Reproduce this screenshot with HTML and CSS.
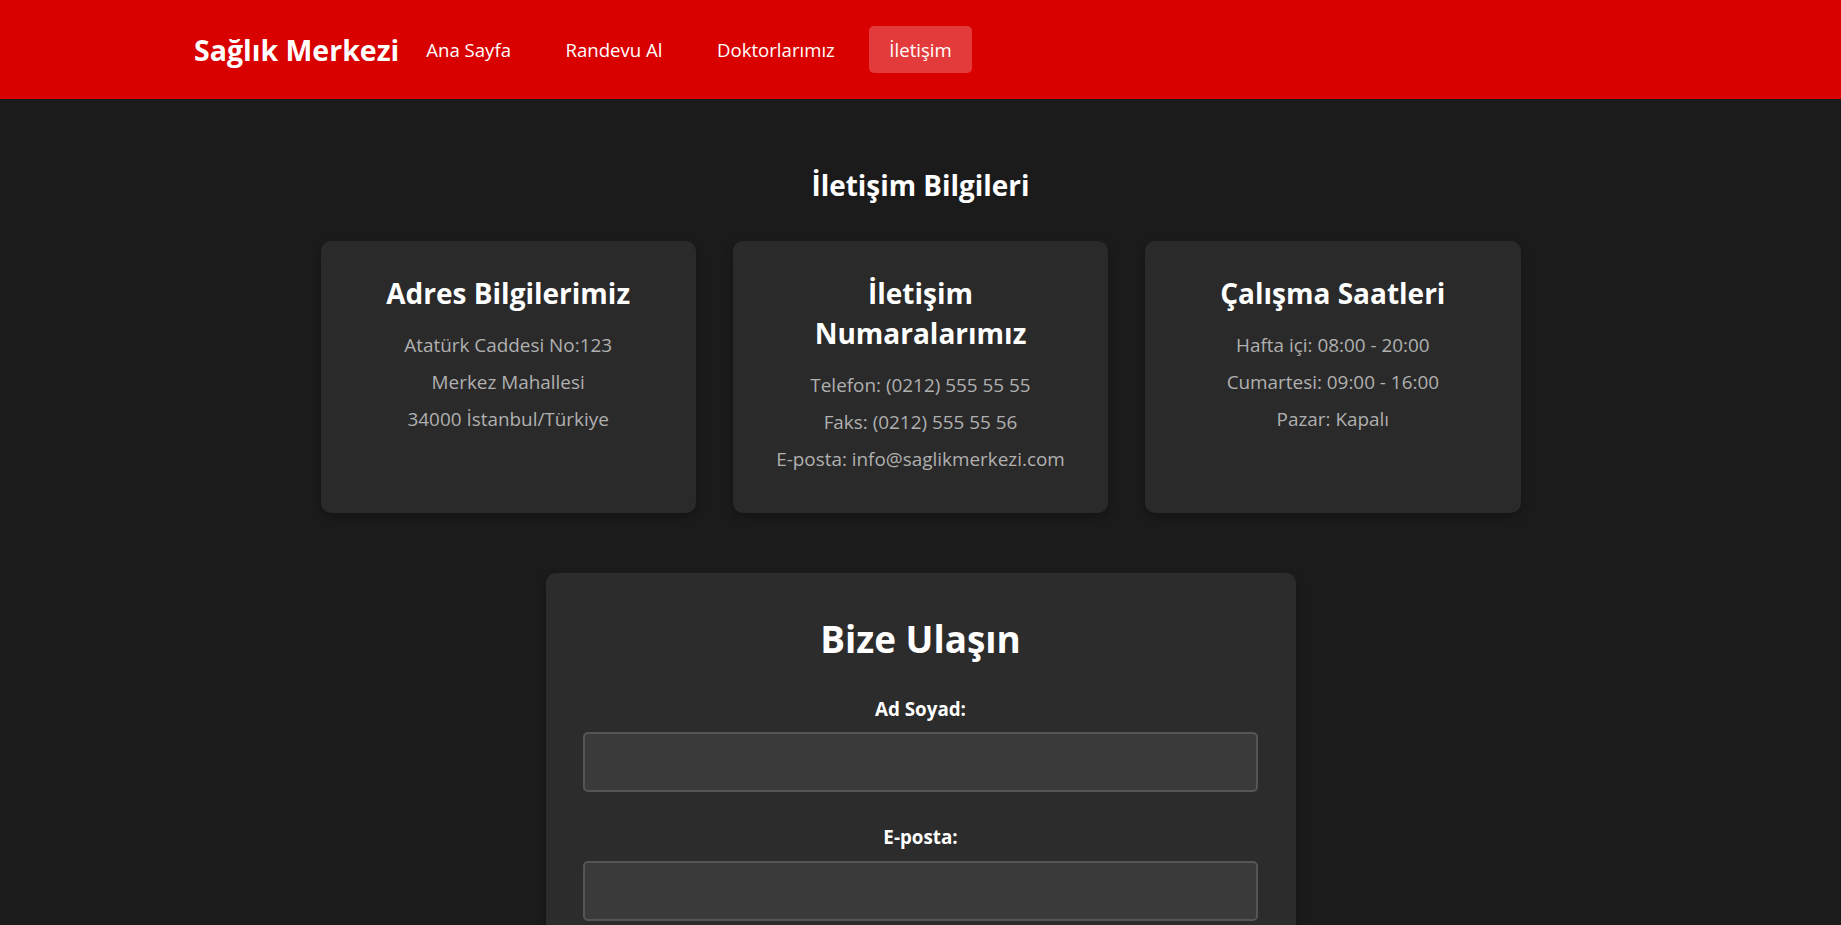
FILE: index.html
```html
<!DOCTYPE html>
<html lang="tr">
<head>
<meta charset="utf-8">
<title>İletişim - Sağlık Merkezi</title>
<link rel="stylesheet" href="styles.css">
</head>
<body>
<header class="navbar">
  <div class="logo">Sağlık Merkezi</div>
  <nav class="nav">
    <a class="nav-link" href="#">Ana Sayfa</a>
    <a class="nav-link" href="#">Randevu Al</a>
    <a class="nav-link" href="#">Doktorlarımız</a>
    <a class="nav-link active" href="#">İletişim</a>
  </nav>
</header>
<main class="main">
  <h2 class="page-title">İletişim Bilgileri</h2>
  <section class="cards">
    <div class="card">
      <h3 class="card-title">Adres Bilgilerimiz</h3>
      <p class="card-line">Atatürk Caddesi No:123</p>
      <p class="card-line">Merkez Mahallesi</p>
      <p class="card-line">34000 İstanbul/Türkiye</p>
    </div>
    <div class="card">
      <h3 class="card-title">İletişim<br>Numaralarımız</h3>
      <p class="card-line">Telefon: (0212) 555 55 55</p>
      <p class="card-line">Faks: (0212) 555 55 56</p>
      <p class="card-line">E-posta: info@saglikmerkezi.com</p>
    </div>
    <div class="card">
      <h3 class="card-title">Çalışma Saatleri</h3>
      <p class="card-line">Hafta içi: 08:00 - 20:00</p>
      <p class="card-line">Cumartesi: 09:00 - 16:00</p>
      <p class="card-line">Pazar: Kapalı</p>
    </div>
  </section>
  <form class="contact-form">
    <h2 class="form-title">Bize Ulaşın</h2>
    <div class="form-group">
      <label class="form-label" for="ad">Ad Soyad:</label>
      <input class="form-input" id="ad" type="text">
    </div>
    <div class="form-group">
      <label class="form-label" for="email">E-posta:</label>
      <input class="form-input" id="email" type="email">
    </div>
  </form>
</main>
</body>
</html>
```
FILE: styles.css
```css
* { box-sizing: border-box; }
html, body { margin: 0; padding: 0; }
body {
  background: #1b1b1b;
  color: #ffffff;
  font-family: "Open Sans", "Noto Sans", sans-serif;
  overflow: hidden;
}
.navbar {
  height: 99px;
  background: #d90000;
  display: flex;
  align-items: center;
  padding: 0 194px;
}
.logo {
  font-size: 28.5px;
  font-weight: 700;
  line-height: 38px;
  color: #fff;
}
.nav {
  display: flex;
  align-items: center;
  gap: 14.5px;
  margin-left: 7px;
}
.nav-link {
  color: #fff;
  text-decoration: none;
  font-size: 18.6px;
  line-height: 25px;
  padding: 11px 20px;
  border-radius: 5px;
}
.nav-link.active { background: #e33b3b; }
.main {
  display: flex;
  flex-direction: column;
  align-items: center;
  padding-top: 67px;
}
.page-title {
  margin: 0;
  font-size: 27.9px;
  line-height: 38px;
  font-weight: 700;
}
.cards {
  margin-top: 37px;
  width: 1200px;
  display: grid;
  grid-template-columns: repeat(3, 1fr);
  gap: 37px;
}
.card {
  background: #2a2a2a;
  border-radius: 10px;
  padding: 32px 24px 35px;
  text-align: center;
  box-shadow: 0 4px 10px rgba(0, 0, 0, 0.25);
}
.card-title {
  margin: 0 0 13.7px;
  font-size: 28px;
  line-height: 40px;
  font-weight: 700;
  color: #fff;
}
.card-line {
  margin: 0;
  font-size: 18.9px;
  line-height: 37px;
  color: #b0b0b0;
}
.contact-form {
  margin-top: 60px;
  width: 750px;
  background: #2c2c2c;
  border-radius: 10px;
  padding: 41px 37.5px 40px;
  box-shadow: 0 4px 10px rgba(0, 0, 0, 0.25);
}
.form-title {
  margin: 0 0 32.4px;
  font-size: 36.9px;
  line-height: 50px;
  font-weight: 700;
  text-align: center;
}
.form-group {
  display: flex;
  flex-direction: column;
  align-items: center;
  margin-bottom: 32px;
}
.form-label {
  font-size: 18.8px;
  line-height: 26px;
  font-weight: 700;
  margin-bottom: 10.3px;
}
.form-input {
  width: 100%;
  height: 60px;
  background: #3a3a3a;
  border: 2px solid #555;
  border-radius: 5px;
  color: #fff;
  font: inherit;
  padding: 0 14px;
}
```
